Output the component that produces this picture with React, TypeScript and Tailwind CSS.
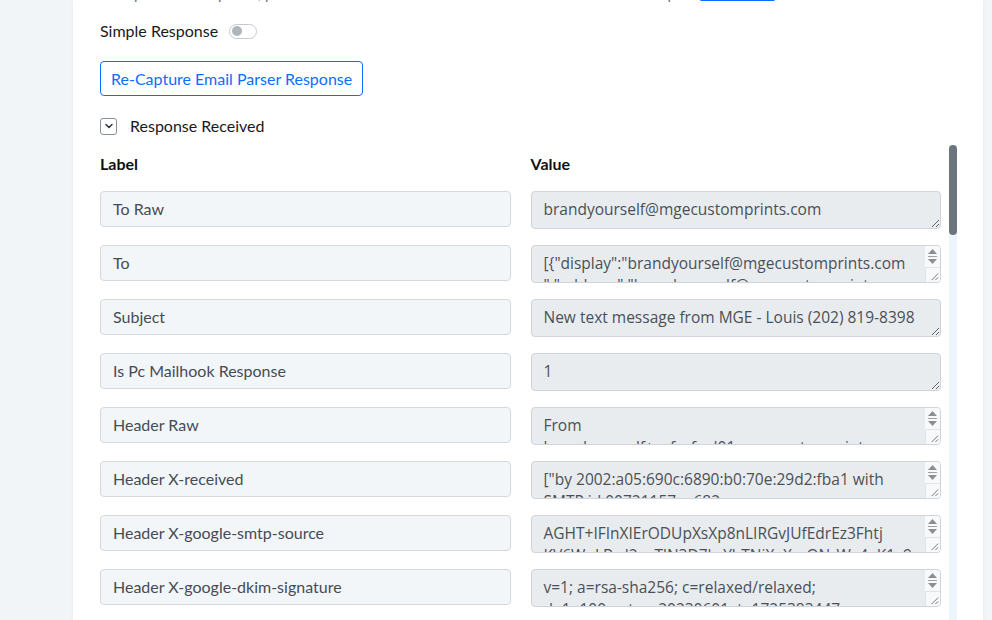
import { ChevronDown } from "lucide-react";

type Row = { label: string; value: string; scroll?: boolean };

// \u200B marks where the original (wider) font wraps the first line
const rows: Row[] = [
  { label: "To Raw", value: "brandyourself@mgecustomprints.com" },
  {
    label: "To",
    value:
      '[{"display":"brandyourself@mgecustomprints.com\u200B","address":"brandyourself@mgecustomprints.com","is_group":false}]',
    scroll: true,
  },
  { label: "Subject", value: "New text message from MGE - Louis (202) 819-8398" },
  { label: "Is Pc Mailhook Response", value: "1" },
  {
    label: "Header Raw",
    value:
      "From\nbrandyourself+caf_=fwd01=mgecustomprints.com@gmail.com Tue Sep 03 17:10:47 2024",
    scroll: true,
  },
  {
    label: "Header X-received",
    value:
      '["by 2002:a05:690c:6890:b0:70e:29d2:fba1 with SMTP id 00721157ae682-6d3f5a5c2c4mr188812467b3.22.1725383447651; Tue, 03 Sep 2024 10:10:47 -0700 (PDT)"]',
    scroll: true,
  },
  {
    label: "Header X-google-smtp-source",
    value:
      "AGHT+IFInXIErODUpXsXp8nLIRGvJUfEdrEz3Fhtj\u200BKV6WqLBrd2xeTlN3D7kcYbTNjXeXmQNrWg4aK1x9fTbLrZcPqW7mY",
    scroll: true,
  },
  {
    label: "Header X-google-dkim-signature",
    value:
      "v=1; a=rsa-sha256; c=relaxed/relaxed; d=1e100.net; s=20230601; t=1725383447; x=1725988247",
    scroll: true,
  },
  { label: "Header X-gm-message-state", value: "AOJu0YzQ3kP8rN2f", scroll: true },
  { label: "Header Mime-version", value: "1.0" },
];

export default function App() {
  return (
    <div
      className="h-[620px] w-[992px] overflow-hidden bg-[#f2f5f8] pl-[73px] pr-[9px]"
      style={{ fontFamily: "Lato, 'Open Sans', sans-serif" }}
    >
      <div className="flow-root h-full bg-white pl-[27px] shadow-[0_0_4px_rgba(0,0,0,0.06)]">
        {/* helper text, scrolled mostly out of view */}
        <p className="-mt-[18px] h-[22px] whitespace-nowrap text-[15px] leading-[22px] text-[#6b7280]">
          To capture the response, please send an email to the mailbox shown above and then tap on{" "}
          <span className="text-[#0d6efd] underline">Learn more</span>
        </p>

        <div className="mt-[16px] flex h-[22px] items-center gap-[11px] text-[16px] text-[#1a1a1a]">
          <span>Simple Response</span>
          <span className="flex h-[15px] w-[28px] items-center rounded-full border border-[#c4c9cf] px-[2px]">
            <span className="h-[10px] w-[10px] rounded-full bg-[#adb5bd]" />
          </span>
        </div>

        <button className="mt-[19px] h-[35px] rounded-[4px] border border-[#0d6efd] px-[10px] text-[16px] text-[#0d6efd]">
          Re-Capture Email Parser Response
        </button>

        <div className="mt-[19px] flex h-[22px] items-center gap-[13px] text-[16px] text-[#1a1a1a]">
          <span className="flex h-[17px] w-[17px] items-center justify-center rounded-[3px] border border-[#8a9099]">
            <ChevronDown className="h-3 w-3 text-[#333]" strokeWidth={3} />
          </span>
          <span>Response Received</span>
        </div>

        <div className="mt-[8px] flex h-[475px] w-[857px] gap-2">
          <div className="w-[841px] overflow-hidden pt-[10px]">
            <div className="grid grid-cols-2 gap-x-5 text-[16px] font-bold leading-[18px] text-[#111]">
              <div>Label</div>
              <div>Value</div>
            </div>
            <div className="mt-[18px] grid grid-cols-2 gap-x-5 gap-y-4">
              {rows.map((r) => (
                <Field key={r.label} row={r} />
              ))}
            </div>
          </div>
          {/* scrollbar */}
          <div className="w-2 bg-[#edf4fc]">
            <div className="h-[90px] w-2 rounded-full bg-[#6c757d]" />
          </div>
        </div>
      </div>
    </div>
  );
}

function Field({ row }: { row: Row }) {
  return (
    <>
      <div className="flex h-[36px] items-center rounded-[4px] border border-[#d5d9de] bg-[#f3f6f9] px-3 text-[16px] text-[#454c55]">
        {row.label}
      </div>
      {row.scroll ? (
        <div className="flex h-[38px] overflow-hidden rounded-[4px] border border-[#ced4da] bg-[#e9ecef]">
          <div
            className="min-w-0 flex-1 whitespace-pre-wrap break-words px-3 py-[6px] text-[15.5px] leading-[22px] text-[#495057]"
            style={{ fontFamily: "'Open Sans', sans-serif" }}
          >
            {row.value}
          </div>
          <div className="flex w-[15px] shrink-0 flex-col bg-[#f8f9fa]">
            <svg width="15" height="21" viewBox="0 0 15 21" className="shrink-0">
              <path d="M3 8 L7.5 3 L12 8 Z" fill="#8e8e8e" />
              <path d="M3 10.5 H12" stroke="#a0a0a0" strokeWidth="1" />
              <path d="M3 13 L12 13 L7.5 18 Z" fill="#8e8e8e" />
            </svg>
            <svg width="15" height="15" viewBox="0 0 15 15" className="mt-auto shrink-0 border-l border-t border-[#e3e3e3]">
              <path d="M13 6 L6 13 M13 10 L10 13" stroke="#6e6e6e" strokeWidth="1" />
            </svg>
          </div>
        </div>
      ) : (
        <textarea
          readOnly
          value={row.value}
          rows={1}
          className="block h-[38px] w-full overflow-hidden rounded-[4px] border border-[#ced4da] bg-[#e9ecef] px-3 py-[6px] text-[15.5px] leading-[22px] text-[#495057] outline-none"
          style={{ fontFamily: "'Open Sans', sans-serif" }}
        />
      )}
    </>
  );
}
